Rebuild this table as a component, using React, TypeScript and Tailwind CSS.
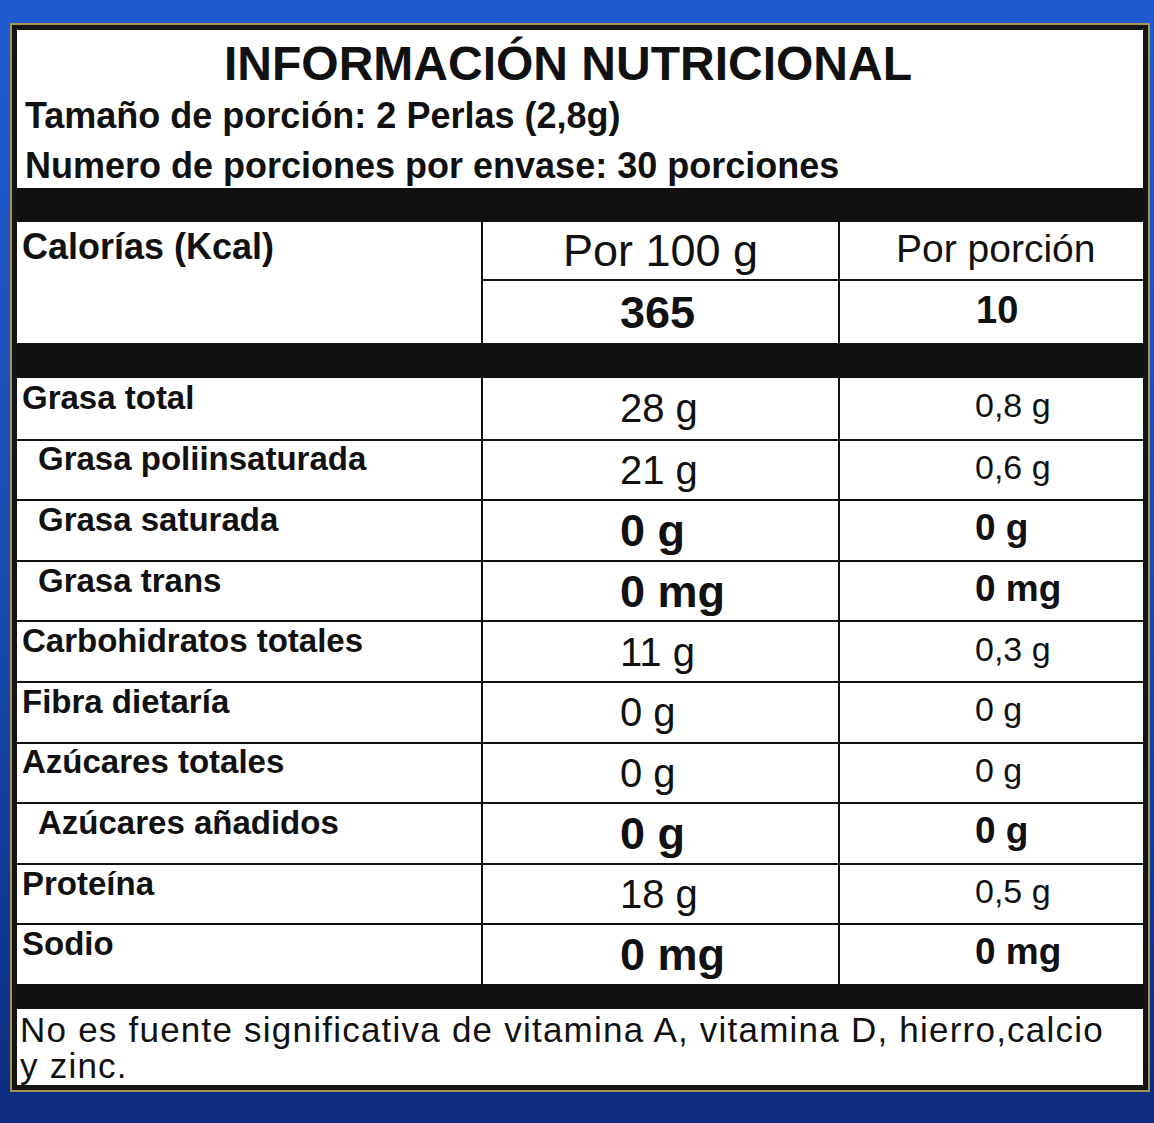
type Row = {
  label: string;
  sub?: boolean;
  per100: string;
  perServing: string;
  bold?: boolean;
};

const rows: Row[] = [
  { label: "Grasa total", per100: "28 g", perServing: "0,8 g" },
  { label: "Grasa poliinsaturada", sub: true, per100: "21 g", perServing: "0,6 g" },
  { label: "Grasa saturada", sub: true, per100: "0 g", perServing: "0 g", bold: true },
  { label: "Grasa trans", sub: true, per100: "0 mg", perServing: "0 mg", bold: true },
  { label: "Carbohidratos totales", per100: "11 g", perServing: "0,3 g" },
  { label: "Fibra dietaría", per100: "0 g", perServing: "0 g" },
  { label: "Azúcares totales", per100: "0 g", perServing: "0 g" },
  { label: "Azúcares añadidos", sub: true, per100: "0 g", perServing: "0 g", bold: true },
  { label: "Proteína", per100: "18 g", perServing: "0,5 g" },
  { label: "Sodio", per100: "0 mg", perServing: "0 mg", bold: true },
];

export default function App() {
  return (
    <div className="w-[1154px] h-[1123px] overflow-hidden bg-gradient-to-b from-[#1f5bd0] via-[#1a4cb4] to-[#0d2c80] font-['Liberation_Sans',Arial,sans-serif] text-[#111]">
      {/* gold rim + dark frame */}
      <div className="ml-[10px] mt-[23px] w-[1140px] h-[1069px] bg-[#a8924f] p-[2px]">
        <div className="h-full border-[5px] border-[#141414] bg-white flex flex-col">
          {/* Header */}
          <div className="pt-[10px] pb-[4px]">
            <h1 className="text-center pr-[24px] text-[48px] leading-[48px] font-bold">
              INFORMACIÓN NUTRICIONAL
            </h1>
            <p className="mt-[10px] pl-[8px] text-[36px] leading-[36px] font-bold">
              Tamaño de porción: 2 Perlas (2,8g)
            </p>
            <p className="mt-[14px] pl-[8px] text-[36px] leading-[36px] font-bold">
              Numero de porciones por envase: 30 porciones
            </p>
          </div>

          <div className="h-[34px] bg-[#111]" />

          {/* Calories */}
          <div className="flex h-[121px]">
            <div className="w-[464px] pt-[7px] pl-[5px] text-[36px] leading-[36px] font-bold">
              Calorías (Kcal)
            </div>
            <div className="w-[357px] border-l-2 border-[#111] flex flex-col">
              <div className="h-[59px] border-b-2 border-[#111] flex items-center justify-center text-[45px] leading-none">
                Por 100 g
              </div>
              <div className="flex-1 flex items-center pl-[137px] text-[45px] leading-none font-bold">
                365
              </div>
            </div>
            <div className="flex-1 border-l-2 border-[#111] flex flex-col">
              <div className="h-[59px] border-b-2 border-[#111] flex items-center pl-[56px] pb-[4px] text-[39px] leading-none">
                Por porción
              </div>
              <div className="flex-1 flex items-center pl-[136px] pb-[4px] text-[38px] leading-none font-bold">
                10
              </div>
            </div>
          </div>

          <div className="h-[35px] bg-[#111]" />

          {/* Nutrients */}
          <div className="flex flex-col">
            {rows.map((row, i) => (
              <div
                key={row.label}
                className={`flex h-[60.6px] ${i > 0 ? "border-t-2 border-[#111]" : ""}`}
              >
                <div
                  className={`w-[464px] flex items-center pb-[22px] text-[33px] leading-none font-bold ${
                    row.sub ? "pl-[21px]" : "pl-[5px]"
                  }`}
                >
                  {row.label}
                </div>
                <div
                  className={`w-[357px] border-l-2 border-[#111] flex items-center pl-[137px] leading-none ${
                    row.bold ? "text-[45px] font-bold" : "text-[40px]"
                  }`}
                >
                  {row.per100}
                </div>
                <div
                  className={`flex-1 border-l-2 border-[#111] flex items-center pl-[135px] pb-[6px] leading-none ${
                    row.bold ? "text-[37px] font-bold" : "text-[34px]"
                  }`}
                >
                  {row.perServing}
                </div>
              </div>
            ))}
          </div>

          <div className="h-[25px] bg-[#111]" />

          {/* Footer note */}
          <div className="pt-[3px] pl-[3px] text-[35px] tracking-[0.035em]">
            <p className="leading-[36px]">
              No es fuente significativa de vitamina A, vitamina D, hierro,calcio
            </p>
            <p className="leading-[36px]">y zinc.</p>
          </div>
        </div>
      </div>
    </div>
  );
}
